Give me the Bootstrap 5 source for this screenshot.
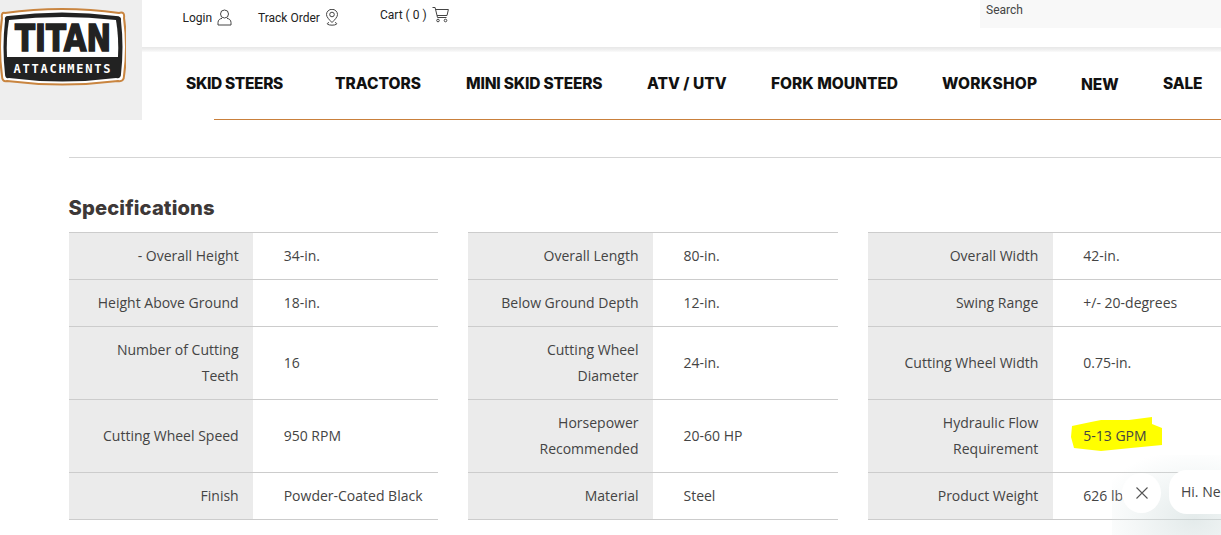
<!doctype html>
<html lang="en">
<head>
<meta charset="utf-8">
<title>Titan Attachments</title>
<link rel="stylesheet" href="https://cdn.jsdelivr.net/npm/bootstrap@5.3.0/dist/css/bootstrap.min.css">
<style>
html,body{overflow:hidden;height:535px}
body{font-family:"Open Sans",sans-serif;color:#444;background:#fff;position:relative}
.site-head{display:flex;height:120px}
.logo-box{width:142px;height:120px;background:#eee;flex:none;padding-top:8px}
.logo-box svg{display:block}
.head-main{flex:1;min-width:0}
.top-strip{height:47px;position:relative;font-family:Roboto,sans-serif;font-size:12px;color:#222}
.shade-band{height:5px;background:linear-gradient(#e7e7e7,#f1f1f1 60%,#fbfbfb)}
.top-link{position:absolute;display:flex;align-items:center;gap:5px;line-height:16px;white-space:nowrap}
.t-login{left:40.500px;top:9px}
.t-track{left:116px;top:9px}
.t-cart{left:238px;top:6px}
.search-box{position:absolute;left:838px;right:0;top:0;height:28px;background:#f8f8f8;padding:2px 6px;color:#444;line-height:16px}
.main-nav{height:68px;display:block;position:relative;font-family:Inter,sans-serif;font-weight:800;font-size:15.500px;color:#111;white-space:nowrap}
.main-nav::after{content:"";position:absolute;left:72px;right:0;top:67px;height:1px;background:#c9803c}
.nav-i{position:absolute;top:22px;line-height:20px}
.nav-new{top:23px}
.nav-tight{letter-spacing:-.35px}
.nav-tighter{letter-spacing:-.2px}
.nav-wide{letter-spacing:.25px}
.page-body{padding:37px 0 0 68.600px;width:1238px}
.rule-top{border-top:1px solid #d5d5d5;margin:0;opacity:1}
.spec-title{font-family:Inter,sans-serif;font-weight:800;font-size:20.200px;letter-spacing:.1px;line-height:26px;color:#3d3837;margin:37px 0 11px}
.spec-row{--bs-gutter-x:30px;margin:0 -15px}
.spec-table{margin:0;table-layout:fixed;border-top:1px solid #ccc;font-size:14px;line-height:26px;color:#444;--bs-table-color:#444}
.spec-table td,.spec-table th{border:0;border-bottom:1px solid #ccc;vertical-align:middle;font-weight:400;padding:10px 0}
.spec-table th{width:184.600px;background:#ebebeb;text-align:right;padding:10px 14.500px 10px 25px;--bs-table-bg:#ebebeb}
.spec-table td{padding-left:30.500px}
.tall{height:73px}
.mark-wrap{position:relative;display:inline-block;z-index:0}
.mark-wrap svg{position:absolute;left:-12px;top:-6px;z-index:-1}
.chat-glow{position:absolute;left:1112px;top:455px;width:109px;height:80px;pointer-events:none;background:radial-gradient(ellipse 100px 70px at 75% 80%,rgba(205,218,218,.55),rgba(220,230,230,.3) 60%,rgba(255,255,255,0))}
.chat-x{position:absolute;left:1122px;top:473px;width:39px;height:40px;border-radius:50%;background:#fff;display:flex;align-items:center;justify-content:center}
.chat-bub{position:absolute;left:1169px;top:470px;width:120px;height:44px;border-radius:18px;background:#fff;font-size:14px;line-height:44px;padding-left:12px;color:#444}
</style>
</head>
<body>
<header class="site-head">
  <div class="logo-box">
    <svg width="126" height="78" viewBox="0 0 126 78">
      <path d="M5 5 Q62 -3 119 5 Q125 3 124 10 Q128 39 124 68 Q124 74 118 73 Q62 80 7 73 Q2 74 2 68 Q-2 39 2 10 Q1 4 5 5Z" fill="#fff" stroke="#c98540" stroke-width="2"/>
      <path d="M8 8 Q62 1 116 8 Q122 8 121 13 Q124 39 121 66 Q121 71 116 70 Q62 77 9 70 Q5 71 5 66 Q2 39 5 13 Q4 8 8 8Z" fill="#222"/>
      <path d="M9 12 Q62 6 116 12 Q119 30 118 49 L7 49 Q6 30 9 12Z" fill="#fff"/>
      <text x="63" y="43" text-anchor="middle" font-family="'DejaVu Sans',sans-serif" font-weight="700" font-size="37" textLength="96" lengthAdjust="spacingAndGlyphs" fill="#222" stroke="#222" stroke-width="1.600">TITAN</text>
      <text x="62" y="65" text-anchor="middle" font-family="'DejaVu Sans Mono',monospace" font-weight="700" font-size="12" textLength="97" lengthAdjust="spacing" fill="#fff">ATTACHMENTS</text>
    </svg>
  </div>
  <div class="head-main">
    <div class="top-strip">
      <span class="top-link t-login">Login
        <svg width="15" height="17" viewBox="0 0 15 17" fill="none" stroke="#444" stroke-width="1"><circle cx="7.500" cy="5" r="4"/><path d="M1 16v-2.500C1 11 3 9.600 5 9.400M14 16v-2.500C14 11 12 9.600 10 9.400M1 16h13"/></svg></span>
      <span class="top-link t-track">Track Order
        <svg width="14" height="17" viewBox="0 0 14 17" fill="none" stroke="#444" stroke-width="1"><path d="M7 13.500C4 10.500 1.500 8 1.500 5.500a5.500 5.200 0 0 1 11 0C12.500 8 10 10.500 7 13.500Z"/><circle cx="7" cy="5.500" r="2.300"/><path d="M4 13.500C2.500 14 2 14.500 2.500 15.200 4 16.500 10 16.500 11.500 15.200 12 14.500 11.500 14 10 13.500"/></svg></span>
      <span class="top-link t-cart">Cart ( 0 )
        <svg width="17" height="17" viewBox="0 0 17 17" fill="none" stroke="#444" stroke-width="1"><path d="M.5 1.500h2.600l2.400 10h9M3.600 3.500h12.800l-1.400 6H5"/><circle cx="6" cy="14.500" r="1.300"/><circle cx="13.500" cy="14.500" r="1.300"/></svg></span>
      <div class="search-box">Search</div>
    </div>
    <div class="shade-band"></div>
    <nav class="main-nav">
      <span class="nav-i nav-tight" style="left:44px">SKID STEERS</span>
      <span class="nav-i" style="left:193px">TRACTORS</span>
      <span class="nav-i nav-tighter" style="left:324px">MINI SKID STEERS</span>
      <span class="nav-i" style="left:505px">ATV / UTV</span>
      <span class="nav-i" style="left:629px">FORK MOUNTED</span>
      <span class="nav-i nav-wide" style="left:800px">WORKSHOP</span>
      <span class="nav-i nav-new" style="left:939px">NEW</span>
      <span class="nav-i nav-tighter" style="left:1021px">SALE</span>
    </nav>
  </div>
</header>
<main class="page-body">
  <hr class="rule-top">
  <h2 class="spec-title">Specifications</h2>
  <div class="row spec-row">
    <div class="col-4">
      <table class="table spec-table"><tbody>
        <tr><th>- Overall Height</th><td>34-in.</td></tr>
        <tr><th>Height Above Ground</th><td>18-in.</td></tr>
        <tr class="tall"><th>Number of Cutting Teeth</th><td>16</td></tr>
        <tr class="tall"><th>Cutting Wheel Speed</th><td>950 RPM</td></tr>
        <tr><th>Finish</th><td>Powder-Coated Black</td></tr>
      </tbody></table>
    </div>
    <div class="col-4">
      <table class="table spec-table"><tbody>
        <tr><th>Overall Length</th><td>80-in.</td></tr>
        <tr><th>Below Ground Depth</th><td>12-in.</td></tr>
        <tr class="tall"><th>Cutting Wheel Diameter</th><td>24-in.</td></tr>
        <tr class="tall"><th>Horsepower Recommended</th><td>20-60 HP</td></tr>
        <tr><th>Material</th><td>Steel</td></tr>
      </tbody></table>
    </div>
    <div class="col-4">
      <table class="table spec-table"><tbody>
        <tr><th>Overall Width</th><td>42-in.</td></tr>
        <tr><th>Swing Range</th><td>+/- 20-degrees</td></tr>
        <tr class="tall"><th>Cutting Wheel Width</th><td>0.75-in.</td></tr>
        <tr class="tall"><th>Hydraulic Flow Requirement</th><td><span class="mark-wrap"><svg width="92" height="36" viewBox="0 0 92 36"><path d="M1 9L20 5 30 3 58 3 81 0 81 7 91 11 91 28 60 31 30 34 3 31 0 20Z" fill="#ff0"/></svg>5-13 GPM</span></td></tr>
        <tr><th>Product Weight</th><td>626 lb.</td></tr>
      </tbody></table>
    </div>
  </div>
</main>
<div class="chat-glow"></div>
<div class="chat-x"><svg width="12" height="12" viewBox="0 0 12 12" stroke="#555" stroke-width="1.100" fill="none"><path d="M.5.500l11 11M11.500.500l-11 11"/></svg></div>
<div class="chat-bub">Hi. Need help?</div>
<script src="https://cdn.jsdelivr.net/npm/bootstrap@5.3.0/dist/js/bootstrap.bundle.min.js"></script>
</body>
</html>
